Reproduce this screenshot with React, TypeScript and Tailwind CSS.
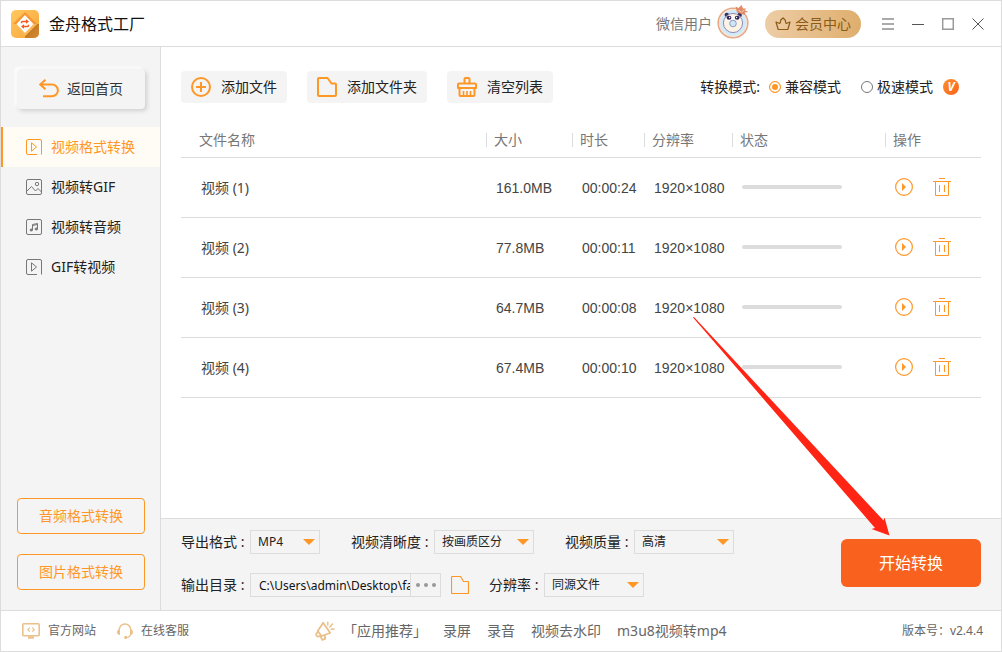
import { useState } from "react";
import type { ReactNode } from "react";

interface VideoFile {
  name: string;
  size: string;
  duration: string;
  resolution: string;
}

const files: VideoFile[] = [
  { name: "视频 (1)", size: "161.0MB", duration: "00:00:24", resolution: "1920×1080" },
  { name: "视频 (2)", size: "77.8MB", duration: "00:00:11", resolution: "1920×1080" },
  { name: "视频 (3)", size: "64.7MB", duration: "00:00:08", resolution: "1920×1080" },
  { name: "视频 (4)", size: "67.4MB", duration: "00:00:10", resolution: "1920×1080" },
];

const columns = ["大小", "时长", "分辨率", "状态", "操作"];

const promoLinks = ["「应用推荐」", "录屏", "录音", "视频去水印", "m3u8视频转mp4"];

function LogoIcon() {
  return (
    <svg width="28" height="28" viewBox="0 0 28 28" aria-hidden="true">
      <defs>
        <linearGradient id="logo" x1="0" y1="0" x2="1" y2="1">
          <stop offset="0" stopColor="#ffc95e" />
          <stop offset="1" stopColor="#f7a43c" />
        </linearGradient>
        <linearGradient id="logoShade" x1="0" y1="0" x2="1" y2="1">
          <stop offset="0.4" stopColor="#c47a26" />
          <stop offset="1" stopColor="#d68a30" />
        </linearGradient>
        <clipPath id="logoClip">
          <rect width="28" height="28" rx="5" />
        </clipPath>
      </defs>
      <g clipPath="url(#logoClip)">
        <rect width="28" height="28" fill="url(#logo)" />
        <path d="M26 14h2v14H14v-2z" fill="url(#logoShade)" />
        <path d="M14 2 26 14H2z" fill="#f8952f" />
        <path d="M2 14h24L14 26z" fill="#fdb856" />
      </g>
      <path d="M14 5 22.500 14 14 23 5.500 14z" fill="#fff" />
      <path
        d="M10.500 13.200v-.700a1 1 0 0 1 1-1h4M17.500 14.800v.700a1 1 0 0 1-1 1h-4"
        fill="none"
        stroke="#f4581e"
        strokeWidth="1.500"
      />
      <path d="M15 9.300l3 2.200-3 2.200zM13 14.300l-3 2.200 3 2.200z" fill="#f4581e" />
    </svg>
  );
}

function AvatarIcon() {
  return (
    <svg width="34" height="37" viewBox="0 0 34 37" aria-hidden="true">
      <circle cx="16" cy="18" r="14.800" fill="#cfeafb" stroke="#e9a782" strokeWidth="1.600" />
      <circle cx="16" cy="18" r="13.300" fill="none" stroke="#f8e3d6" strokeWidth="1.200" />
      <circle cx="9.800" cy="10" r="2.200" fill="#3b2e5e" />
      <circle cx="22.700" cy="10" r="2.200" fill="#3b2e5e" />
      <circle cx="16" cy="18" r="9.600" fill="#fdf3e4" stroke="#8581ad" strokeWidth="0.900" />
      <path d="M8.500 15c0-5 15-5 15 0z" fill="#fff" />
      <ellipse cx="12" cy="12.800" rx="2.400" ry="2" fill="#2f2358" />
      <ellipse cx="20.200" cy="12.800" rx="2.400" ry="2" fill="#2f2358" />
      <circle cx="12.600" cy="12.500" r="0.700" fill="#fff" />
      <circle cx="19.600" cy="12.500" r="0.700" fill="#fff" />
      <circle cx="16" cy="18.500" r="3.300" fill="#cfe6f8" stroke="#8d9ac8" strokeWidth="1" />
      <path d="M20 7.500 18.500 1.500l3 1.500L24.500 0l1.500 3.500 3 0-1 2 3.500 1.500-4 .500.500 2.500z" fill="#e38b66" />
      <path d="M21.500 5.500l3 1.500 3-2" fill="none" stroke="#f8d9c8" strokeWidth="0.800" />
    </svg>
  );
}

function CrownIcon() {
  return (
    <svg width="16" height="14" viewBox="0 0 16 14" fill="none" stroke="#8a5a17" strokeWidth="1.200" strokeLinejoin="round" aria-hidden="true">
      <path d="M3.200 12.500 1 5l3.700 1.500C5.800 5.500 5.500 3.500 5.800 3L8 1l2.200 2c.300.500 0 2.500 1.100 3.500L15 5l-2.200 7.500z" />
    </svg>
  );
}

function BackIcon() {
  return (
    <svg width="20" height="20" viewBox="0 0 20 20" fill="none" stroke="#ff9727" strokeWidth="2" aria-hidden="true">
      <path d="M6.500 .800 1.300 5.500l5.200 4.700" />
      <path d="M1.500 5.500h11.500a5.900 5.900 0 0 1 0 11.800H4" />
    </svg>
  );
}

function VideoIcon() {
  return (
    <svg width="16" height="16" viewBox="0 0 16 16" fill="none" stroke="currentColor" aria-hidden="true">
      <path d="M11 15.500H2A1.500 1.500 0 0 1 .500 14V2A1.500 1.500 0 0 1 2 .500h12A1.500 1.500 0 0 1 15.500 2v13.500" />
      <path d="M5.500 3.800v8.400L10.500 8z" />
    </svg>
  );
}

function ImageIcon() {
  return (
    <svg width="16" height="16" viewBox="0 0 16 16" fill="none" stroke="currentColor" aria-hidden="true">
      <rect x=".500" y=".500" width="15" height="15" rx="1.500" />
      <circle cx="11" cy="5" r="1.700" />
      <path d="M.500 12.500 5.500 7.500 9.500 12l2.500-2.500 3.500 3.500" />
    </svg>
  );
}

function MusicIcon() {
  return (
    <svg width="16" height="16" viewBox="0 0 16 16" fill="none" stroke="currentColor" aria-hidden="true">
      <rect x=".500" y=".500" width="15" height="15" rx="1.500" />
      <path d="M6.500 11V5.500l5-1V10M6.500 6.500l5-1" />
      <ellipse cx="5.300" cy="11" rx="1.200" ry="1" fill="currentColor" />
      <ellipse cx="10.300" cy="10" rx="1.200" ry="1" fill="currentColor" />
    </svg>
  );
}

function AddIcon() {
  return (
    <svg width="20" height="20" viewBox="0 0 20 20" fill="none" stroke="#ff9727" strokeWidth="2" aria-hidden="true">
      <circle cx="10" cy="10" r="9" />
      <path d="M10 5v10M5 10h10" />
    </svg>
  );
}

function FolderIcon() {
  return (
    <svg width="20" height="20" viewBox="0 0 20 20" fill="none" stroke="#ff9727" strokeWidth="2" strokeLinejoin="round" aria-hidden="true">
      <path d="M2 1h8.500l4 5.500H18a1 1 0 0 1 1 1V18a1 1 0 0 1-1 1H2a1 1 0 0 1-1-1V2a1 1 0 0 1 1-1z" />
    </svg>
  );
}

function SmallFolderIcon() {
  return (
    <svg width="18" height="18" viewBox="0 0 18 18" fill="none" stroke="#ff9727" strokeLinejoin="round" aria-hidden="true">
      <path d="M1.500 .500h8L12.500 5.500h4a1 1 0 0 1 1 1v10a1 1 0 0 1-1 1h-15a1 1 0 0 1-1-1v-15a1 1 0 0 1 1-1z" strokeWidth="1.200" />
    </svg>
  );
}

function BroomIcon() {
  return (
    <svg width="20" height="20" viewBox="0 0 20 20" fill="none" stroke="#ff9727" strokeWidth="2" strokeLinejoin="round" aria-hidden="true">
      <path d="M7.500 6V2a1 1 0 0 1 1-1h3a1 1 0 0 1 1 1v4" />
      <path d="M1 11V7.500a1 1 0 0 1 1-1h16a1 1 0 0 1 1 1V11z" />
      <path d="M2.500 11v7a1 1 0 0 0 1 1h13a1 1 0 0 0 1-1v-7" />
      <path d="M6.500 14v5M10 14v5M13.500 14v5" strokeWidth="1.600" />
    </svg>
  );
}

function PlayIcon() {
  return (
    <svg width="18" height="18" viewBox="0 0 18 18" aria-hidden="true">
      <circle cx="9" cy="9" r="8.400" fill="none" stroke="#ff9727" strokeWidth="1.200" />
      <path d="M7 5v8l4-4z" fill="#ff9727" />
    </svg>
  );
}

function TrashIcon() {
  return (
    <svg width="18" height="18" viewBox="0 0 18 18" fill="none" stroke="#ff9727" aria-hidden="true">
      <path d="M6 .500h6M0 3.500h18M2.500 3.500v14h13v-14M6.500 7v7M11.500 7v7" />
    </svg>
  );
}

function MonitorIcon() {
  return (
    <svg width="18" height="16" viewBox="0 0 18 16" fill="none" stroke="#ebc08a" strokeWidth="1.600" aria-hidden="true">
      <rect x=".800" y=".800" width="16.400" height="12" rx="1" />
      <path d="M7.800 4.700 5.800 6.700l2 2M10.200 4.700l2 2-2 2" strokeWidth="1.200" />
      <path d="M6 14.500h6" strokeWidth="2.400" />
    </svg>
  );
}

function HeadsetIcon() {
  return (
    <svg width="16" height="16" viewBox="0 0 16 16" fill="none" stroke="#ebc08a" strokeWidth="1.600" aria-hidden="true">
      <path d="M2.200 8V6.800a5.800 5.800 0 0 1 11.600 0V8" />
      <path d="M3 6.500v5.500C1 12 0 10.800 0 9.200s1-2.700 3-2.700zM13 6.500v5.500c2 0 3-1.200 3-2.800s-1-2.700-3-2.700z" fill="#ebc08a" stroke="none" />
      <path d="M13.800 10.500c-.300 2.500-2 4-4.600 4.200" strokeWidth="1.300" />
      <circle cx="8.700" cy="14.400" r="1.600" fill="#ebc08a" stroke="none" />
    </svg>
  );
}

function MegaphoneIcon() {
  return (
    <svg width="20" height="20" viewBox="0 0 20 20" fill="none" stroke="#ebc08a" strokeWidth="1.800" strokeLinecap="round" strokeLinejoin="round" aria-hidden="true">
      <path d="M8.200 1.800 15.200 12l-8.700 3-3.800-5z" />
      <path d="M3 10.500 1.300 12.800c-.600 1.500.800 3 2.500 2.600l2.700-.600" />
      <path d="M5.800 15.800l1.400 3 3-.900-.400-3.300" />
      <path d="M12.800 4V1.300M14.800 6l2.700-3M16.300 8.300l2.700-.300" strokeWidth="1.500" />
    </svg>
  );
}

const navItems = [
  { label: "视频格式转换", icon: <VideoIcon /> },
  { label: "视频转GIF", icon: <ImageIcon /> },
  { label: "视频转音频", icon: <MusicIcon /> },
  { label: "GIF转视频", icon: <VideoIcon /> },
];

function ToolButton({ icon, label }: { icon: ReactNode; label: string }) {
  return (
    <button className="flex h-8 items-center gap-[10px] rounded bg-[#f4f4f4] px-[10px] text-[#222]">
      {icon}
      {label}
    </button>
  );
}

interface SelectProps {
  id: string;
  label: string;
  labelWidth: string;
  width: string;
  options: string[];
}

function SelectField({ id, label, labelWidth, width, options }: SelectProps) {
  return (
    <div className="flex items-center">
      <label htmlFor={id} className={`${labelWidth} whitespace-nowrap`}>
        {label} :
      </label>
      <div className={`relative ${width}`}>
        <select
          id={id}
          className="block h-6 w-full appearance-none border border-[#dcdcdc] bg-[#f4f4f4] pl-[7px] text-xs text-[#222]"
        >
          {options.map((option) => (
            <option key={option}>{option}</option>
          ))}
        </select>
        <svg width="12" height="6" viewBox="0 0 12 6" className="pointer-events-none absolute top-[9px] right-[5px]" aria-hidden="true">
          <path d="M0 0h12L6 6z" fill="#ff9727" />
        </svg>
      </div>
    </div>
  );
}

function TitleBar() {
  return (
    <header className="flex h-[46px] items-center border-b border-[#dcdcdc] bg-white pr-2 pl-[10px]">
      <LogoIcon />
      <h1 className="ml-[10px] text-base text-[#111]">金舟格式工厂</h1>
      <div className="ml-auto flex items-center">
        <span className="mr-[5px] text-[#777]">微信用户</span>
        <AvatarIcon />
        <button className="mr-3 ml-[14px] flex h-7 w-24 items-center justify-center gap-1 rounded-full bg-linear-to-r from-[#edcda6] to-[#dfae6c] text-[#8a5a17]">
          <CrownIcon />
          会员中心
        </button>
        <div className="flex">
          <button aria-label="菜单" className="flex h-[30px] w-[30px] items-center justify-center">
            <svg width="12" height="12" viewBox="0 0 12 12" stroke="#aaa" strokeWidth="2" aria-hidden="true">
              <path d="M0 1h12M0 6h12M0 11h12" />
            </svg>
          </button>
          <button aria-label="最小化" className="flex h-[30px] w-[30px] items-center justify-center">
            <svg width="12" height="12" viewBox="0 0 12 12" stroke="#555" aria-hidden="true">
              <path d="M0 6.500h12" />
            </svg>
          </button>
          <button aria-label="最大化" className="flex h-[30px] w-[30px] items-center justify-center">
            <svg width="12" height="12" viewBox="0 0 12 12" fill="none" stroke="#999" strokeWidth="1.500" aria-hidden="true">
              <path d="M.700 .700h10.600v10.600H.700z" />
            </svg>
          </button>
          <button aria-label="关闭" className="flex h-[30px] w-[30px] items-center justify-center">
            <svg width="12" height="12" viewBox="0 0 12 12" stroke="#555" aria-hidden="true">
              <path d="M.500 .500l11 11M11.500 .500l-11 11" />
            </svg>
          </button>
        </div>
      </div>
    </header>
  );
}

function Sidebar() {
  const [active, setActive] = useState("视频格式转换");

  return (
    <aside className="flex w-40 shrink-0 flex-col border-r border-[#dcdcdc] bg-[#f4f4f4] pb-5">
      <button className="mt-[22px] mr-[15px] ml-4 flex h-10 items-center justify-center gap-2 rounded bg-[#f4f4f4] text-[#333] shadow-[2px_2px_4px_#d0d0d0,-2px_-2px_3px_#ffffff]">
        <BackIcon />
        返回首页
      </button>
      <nav className="mt-[18px]">
        {navItems.map((item) => (
          <button
            key={item.label}
            onClick={() => setActive(item.label)}
            className={`flex h-10 w-full items-center gap-[9px] border-l-2 pl-[23px] ${
              item.label === active
                ? "border-[#ff9727] bg-[#fffbf5] text-[#ff9727]"
                : "border-transparent text-[#777]"
            }`}
          >
            {item.icon}
            <span className={item.label === active ? "text-[#ff9727]" : "text-[#222]"}>
              {item.label}
            </span>
          </button>
        ))}
      </nav>
      <div className="mt-auto mr-[15px] ml-4 flex flex-col gap-5">
        <button className="h-9 rounded border border-[#ff9727] text-[#ff9727]">音频格式转换</button>
        <button className="h-9 rounded border border-[#ff9727] text-[#ff9727]">图片格式转换</button>
      </div>
    </aside>
  );
}

function Toolbar() {
  const radio =
    "h-3 w-3 shrink-0 appearance-none rounded-full border border-[#777] bg-white checked:border-[#ff9727] checked:bg-[#ff9727] checked:shadow-[inset_0_0_0_2px_#fff]";

  return (
    <div className="flex items-center gap-5">
      <ToolButton icon={<AddIcon />} label="添加文件" />
      <ToolButton icon={<FolderIcon />} label="添加文件夹" />
      <ToolButton icon={<BroomIcon />} label="清空列表" />
      <div className="mr-[22px] ml-auto flex items-center">
        <span>转换模式:</span>
        <label className="ml-[9px] flex items-center gap-1">
          <input type="radio" name="mode" defaultChecked className={radio} />
          兼容模式
        </label>
        <label className="ml-5 flex items-center gap-1">
          <input type="radio" name="mode" className={radio} />
          极速模式
        </label>
        <span className="ml-[10px] flex h-4 w-4 items-center justify-center rounded-full bg-linear-to-br from-[#ff8f2a] to-[#f9611e] text-xs leading-4 font-bold text-white italic">
          V
        </span>
      </div>
    </div>
  );
}

function FileTable() {
  return (
    <table className="mt-5 w-full table-fixed border-separate border-spacing-0 text-left">
      <colgroup>
        <col />
        <col className="w-[86px]" />
        <col className="w-[72px]" />
        <col className="w-[88px]" />
        <col className="w-[153px]" />
        <col className="w-24" />
      </colgroup>
      <thead>
        <tr className="h-[35px] text-[#777]">
          <th className="border-b border-[#dcdcdc] pl-[18px] font-normal">文件名称</th>
          {columns.map((column) => (
            <th key={column} className="border-b border-[#dcdcdc] font-normal">
              <div className="border-l border-[#dcdcdc] pl-[7px] leading-[14px]">{column}</div>
            </th>
          ))}
        </tr>
      </thead>
      <tbody>
        {files.map((file) => (
          <tr
            key={file.name}
            className="h-[60px] font-['Liberation_Sans','Noto_Sans_CJK_SC',sans-serif] text-[#444]"
          >
            <td className="border-b border-[#dcdcdc] pl-5 font-['Noto_Sans','Noto_Sans_CJK_SC',sans-serif]">
              {file.name}
            </td>
            <td className="border-b border-[#dcdcdc] pl-[10px]">{file.size}</td>
            <td className="border-b border-[#dcdcdc] pl-[10px]">{file.duration}</td>
            <td className="border-b border-[#dcdcdc] pl-[10px]">{file.resolution}</td>
            <td className="border-b border-[#dcdcdc] pb-[2px] pl-[10px]">
              <div className="h-1 w-[100px] rounded-full bg-[#dcdcdc]" />
            </td>
            <td className="border-b border-[#dcdcdc] pb-[2px] pl-[10px]">
              <div className="flex gap-5">
                <button aria-label="播放">
                  <PlayIcon />
                </button>
                <button aria-label="删除">
                  <TrashIcon />
                </button>
              </div>
            </td>
          </tr>
        ))}
      </tbody>
    </table>
  );
}

function ExportPanel() {
  return (
    <section className="flex items-start justify-between border-t border-[#dcdcdc] bg-[#f4f4f4] pt-[11px] pr-5 pb-[13px] pl-5">
      <div className="flex flex-col gap-[19px]">
        <div className="flex items-center gap-[31px]">
          <SelectField id="format" label="导出格式" labelWidth="w-[69px]" width="w-[70px]" options={["MP4", "AVI", "MOV"]} />
          <SelectField id="clarity" label="视频清晰度" labelWidth="w-[83px]" width="w-[100px]" options={["按画质区分"]} />
          <SelectField id="quality" label="视频质量" labelWidth="w-[69px]" width="w-[100px]" options={["高清", "标清"]} />
        </div>
        <div className="flex items-center">
          <label htmlFor="output" className="w-[69px] whitespace-nowrap">
            输出目录 :
          </label>
          <input
            id="output"
            type="text"
            defaultValue="C:\Users\admin\Desktop\factory"
            className="h-6 w-40 border border-r-0 border-[#dcdcdc] bg-[#f4f4f4] pl-2 text-xs text-[#111]"
          />
          <button
            aria-label="浏览"
            className="flex h-6 w-[31px] items-center justify-center gap-1 border border-[#dcdcdc]"
          >
            <span className="h-1 w-1 rounded-full bg-[#999]" />
            <span className="h-1 w-1 rounded-full bg-[#999]" />
            <span className="h-1 w-1 rounded-full bg-[#999]" />
          </button>
          <button aria-label="打开文件夹" className="mr-5 ml-[10px]">
            <SmallFolderIcon />
          </button>
          <SelectField id="resolution" label="分辨率" labelWidth="w-[55px]" width="w-[100px]" options={["同源文件"]} />
        </div>
      </div>
      <div className="relative mt-[9px]">
        <button className="block h-12 w-[140px] rounded-md bg-[#f9611e] text-base text-white">开始转换</button>
        <svg
          width="200"
          height="220"
          viewBox="0 0 200 220"
          className="pointer-events-none absolute right-[88px] bottom-[50px]"
          aria-hidden="true"
        >
          <path d="M0 .500 1 0 190.500 203.500 191.500 200.500 196.500 218.500 178.500 212 182 211z" fill="#ff2414" />
        </svg>
      </div>
    </section>
  );
}

function Footer() {
  return (
    <footer className="flex h-[41px] items-center border-t border-[#dcdcdc] bg-white pr-[18px] pl-[21px] text-xs text-[#666]">
      <a href="#site" className="flex items-center gap-2">
        <MonitorIcon />
        官方网站
      </a>
      <a href="#service" className="ml-[21px] flex items-center gap-2">
        <HeadsetIcon />
        在线客服
      </a>
      <div className="ml-[126px] flex items-center gap-4 text-sm">
        <div className="flex items-center gap-2">
          <MegaphoneIcon />
          <a href="#apps">{promoLinks[0]}</a>
        </div>
        {promoLinks.slice(1).map((link) => (
          <a key={link} href="#apps">
            {link}
          </a>
        ))}
      </div>
      <span className="ml-auto">版本号：v2.4.4</span>
    </footer>
  );
}

function App() {
  return (
    <div className="flex min-h-screen flex-col border border-[#dcdcdc] bg-white font-['Noto_Sans','Noto_Sans_CJK_SC',sans-serif] text-sm text-[#222]">
      <TitleBar />
      <div className="flex flex-1">
        <Sidebar />
        <main className="flex min-w-0 flex-1 flex-col">
          <section className="flex-1 px-5 pt-6">
            <Toolbar />
            <FileTable />
          </section>
          <ExportPanel />
        </main>
      </div>
      <Footer />
    </div>
  );
}

export default App;
